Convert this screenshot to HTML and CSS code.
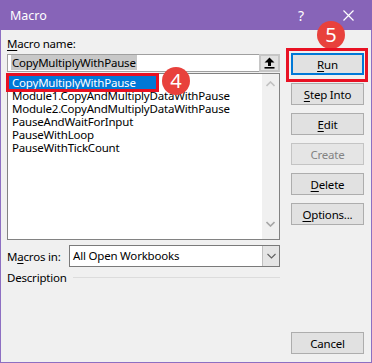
FILE: index.html
```html
<!DOCTYPE html>
<html lang="en">

<head>
    <meta charset="UTF-8">
    <meta name="viewport" content="width=device-width, initial-scale=1.0">
    <title>Macro</title>
    <link rel="stylesheet" href="styles.css">
</head>

<body>
    <div class="window">
        <div class="titlebar">
            <span class="title">Macro</span>
            <span class="help">?</span>
            <span class="close">
                <svg width="11" height="11" viewBox="0 0 11 11">
                    <path d="M0.5 0.5 L10.5 10.5 M10.5 0.5 L0.5 10.5" stroke="#fff" stroke-width="1.2" fill="none" />
                </svg>
            </span>
        </div>

        <div class="content">
            <div class="left">
                <div class="field-label"><u>M</u>acro name:</div>
                <div class="name-row">
                    <div class="name-input"><span class="sel-text">CopyMultiplyWithPause</span></div>
                    <div class="up-btn">
                        <svg width="11" height="12" viewBox="0 0 11 12">
                            <path d="M5.5 0.5 L10.5 5.5 L7 5.5 L7 9 L4 9 L4 5.5 L0.5 5.5 Z" fill="#000" />
                            <rect x="0.5" y="10" width="10" height="1.6" fill="#000" />
                        </svg>
                    </div>
                </div>

                <div class="list">
                    <ul class="items">
                        <li class="active"><span class="item-text">CopyMultiplyWithPause</span></li>
                        <li>Module1.CopyAndMultiplyDataWithPause</li>
                        <li>Module2.CopyAndMultiplyDataWithPause</li>
                        <li>PauseAndWaitForInput</li>
                        <li>PauseWithLoop</li>
                        <li>PauseWithTickCount</li>
                    </ul>
                    <div class="scrollbar">
                        <svg width="9" height="6" viewBox="0 0 9 6">
                            <path d="M0.5 5 L4.5 1 L8.5 5" stroke="#c2c2c2" stroke-width="1.6" fill="none" />
                        </svg>
                        <svg width="9" height="6" viewBox="0 0 9 6">
                            <path d="M0.5 1 L4.5 5 L8.5 1" stroke="#a6a6a6" stroke-width="1.6" fill="none" />
                        </svg>
                    </div>
                    <span class="badge badge-4">4</span>
                </div>

                <div class="macros-row">
                    <span class="row-label">M<u>a</u>cros in:</span>
                    <div class="select">
                        <span class="select-value">All Open Workbooks</span>
                        <span class="select-btn">
                            <svg width="9" height="6" viewBox="0 0 9 6">
                                <path d="M0.5 1 L4.5 5 L8.5 1" stroke="#606060" stroke-width="1.1" fill="none" />
                            </svg>
                        </span>
                    </div>
                </div>

                <div class="desc-row">
                    <span>Description</span>
                    <span class="desc-line"></span>
                </div>
            </div>

            <div class="side">
                <div class="run-wrap">
                    <button class="btn btn-default"><u>R</u>un</button>
                    <span class="badge badge-5">5</span>
                </div>
                <button class="btn"><u>S</u>tep Into</button>
                <button class="btn"><u>E</u>dit</button>
                <button class="btn" disabled>Create</button>
                <button class="btn"><u>D</u>elete</button>
                <button class="btn"><u>O</u>ptions...</button>
                <button class="btn btn-cancel">Cancel</button>
            </div>
        </div>
    </div>
</body>

</html>
```

FILE: styles.css
```css
* {
    box-sizing: border-box;
}

body {
    margin: 0;
    font-family: 'Noto Sans', 'Open Sans', sans-serif;
    font-size: 11.5px;
    letter-spacing: -0.2px;
    color: #000;
}

u {
    text-decoration-thickness: 1px;
    text-underline-offset: 2px;
}

.window {
    width: 372px;
    height: 363px;
    display: flex;
    flex-direction: column;
    background: #f0f0f0;
    border: 1px solid #8d6fc2;
    border-top: none;
}

.titlebar {
    height: 30px;
    margin: 0 -1px;
    background: #8764b8;
    color: #fff;
    display: flex;
    align-items: center;
    padding: 0 0 0 10px;
    letter-spacing: 0;
}

.title {
    font-size: 12.5px;
    flex: 1;
}

.help {
    font-size: 14px;
    width: 24px;
    margin-right: 21px;
}

.close {
    width: 29px;
    display: flex;
}

.content {
    flex: 1;
    display: flex;
    padding: 6px 7px 8px 6px;
}

.left {
    width: 273px;
    display: flex;
    flex-direction: column;
}

.field-label {
    height: 15px;
    line-height: 15px;
    margin-bottom: 3px;
}

.name-row {
    display: flex;
    height: 18px;
}

.name-input {
    flex: 1;
    background: #fff;
    border: 1px solid #a0a0a0;
    border-right: none;
    padding: 1px 0 0 3px;
    line-height: 14px;
}

.sel-text {
    background: #c8c8c8;
    padding: 0 1px;
}

.up-btn {
    width: 21px;
    background: #e1e1e1;
    border: 2px solid #c6c6c6;
    display: flex;
    align-items: center;
    justify-content: center;
}

.list {
    position: relative;
    height: 167px;
    margin-top: 1px;
    background: #fff;
    border: 1px solid #828282;
    display: flex;
}

.items {
    list-style: none;
    margin: 0;
    padding: 2px 0 0 1px;
    flex: 1;
}

.items li {
    height: 13px;
    line-height: 13px;
    padding-left: 3px;
    white-space: nowrap;
}

.items li.active {
    position: relative;
    width: 148px;
    background: #0078d7;
    color: #fff;
}

.items li.active::after {
    content: "";
    position: absolute;
    left: -3px;
    right: -2px;
    top: -3px;
    bottom: -3px;
    border: 3px solid #e81123;
}

.scrollbar {
    width: 17px;
    background: #f0f0f0;
    display: flex;
    flex-direction: column;
    justify-content: space-between;
    align-items: center;
    padding: 7px 0 12px;
}

.badge {
    position: absolute;
    width: 28px;
    height: 28px;
    border-radius: 50%;
    background: #e8413c;
    color: #fff;
    font-size: 20px;
    letter-spacing: 0;
    line-height: 28px;
    text-align: center;
}

.badge-4 {
    left: 154px;
    top: -7px;
}

.badge-5 {
    left: 26px;
    top: -32px;
}

.macros-row {
    display: flex;
    align-items: center;
    height: 22px;
    margin-top: 5px;
}

.row-label {
    width: 62px;
}

.select {
    flex: 1;
    height: 22px;
    display: flex;
    background: #fff;
    border: 1px solid #7a7a7a;
}

.select-value {
    flex: 1;
    line-height: 20px;
    padding-left: 3px;
}

.select-btn {
    width: 17px;
    background: #e5e5e5;
    border-left: 1px solid #c0c0c0;
    display: flex;
    align-items: center;
    justify-content: center;
}

.desc-row {
    display: flex;
    align-items: center;
    margin-top: 3px;
    height: 15px;
}

.desc-line {
    flex: 1;
    height: 1px;
    background: #dcdcdc;
    margin-left: 6px;
}

.side {
    flex: 1;
    display: flex;
    flex-direction: column;
    align-items: flex-end;
    gap: 8px;
    padding-top: 17px;
}

.btn {
    width: 73px;
    height: 22px;
    font-family: inherit;
    font-size: 11.5px;
    letter-spacing: -0.2px;
    color: #000;
    background: #e1e1e1;
    border: 1px solid #adadad;
    padding: 0;
}

.btn:disabled {
    color: #838383;
    background: #e5e5e5;
    border-color: #c4c4c4;
}

.run-wrap {
    position: relative;
}

.run-wrap::after {
    content: "";
    position: absolute;
    left: -5px;
    right: -4px;
    top: -5px;
    bottom: -7px;
    border: 3px solid #e81123;
}

.btn-default {
    border: 2px solid #0078d7;
}

.btn-cancel {
    margin-top: auto;
}
```
